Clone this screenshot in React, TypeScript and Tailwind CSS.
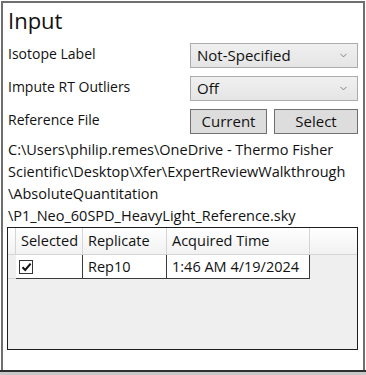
import { ChevronDown } from "lucide-react";

const font = { fontFamily: '"Open Sans", "Noto Sans", sans-serif' };

const Dropdown = ({ value }: { value: string }) => (
  <div className="flex items-center justify-between h-[25px] border border-[#acacac] bg-gradient-to-b from-[#f0f0f0] to-[#e5e5e5] pl-[6px] pr-[8px] text-[15px] text-[#111]">
    <span>{value}</span>
    <ChevronDown size={11} strokeWidth={1.5} className="text-[#555]" />
  </div>
);

const Button = ({ label, className }: { label: string; className: string }) => (
  <button className={`h-[25px] border border-[#707070] bg-[#dddddd] text-[15px] text-[#111] ${className}`}>
    {label}
  </button>
);

export default function App() {
  return (
    <div className="w-[366px] h-[375px] bg-white flex flex-col text-[#111]" style={font}>
      <div className="flex-1 mx-[1px] mt-[1px] border-t-2 border-l-2 border-r-2 border-[#6e6e6e] px-[5px] flex flex-col">
        <h1 className="text-[22px] leading-[30px] mt-[2px]">Input</h1>

        <div className="grid grid-cols-[182px_1fr] gap-y-[8px] mt-[8px] items-center text-[14px]">
          <span className="-mt-[5px]">Isotope Label</span>
          <Dropdown value="Not-Specified" />
          <span className="-mt-[5px]">Impute RT Outliers</span>
          <Dropdown value="Off" />
          <span className="-mt-[5px]">Reference File</span>
          <div className="flex gap-[7px]">
            <Button label="Current" className="w-[77px]" />
            <Button label="Select" className="flex-1" />
          </div>
        </div>

        <div className="mt-[5px] text-[14.5px] leading-[22px]">
          <div>C:\Users\philip.remes\OneDrive - Thermo Fisher</div>
          <div>Scientific\Desktop\Xfer\ExpertReviewWalkthrough</div>
          <div>\AbsoluteQuantitation</div>
          <div>\P1_Neo_60SPD_HeavyLight_Reference.sky</div>
        </div>

        <div className="-ml-[1px] h-[123px] border border-[#1e1e1e] bg-[#efefef] flex flex-col text-[14.5px]">
          <div className="flex h-[27px] bg-gradient-to-b from-[#ffffff] to-[#f2f2f2] border-b border-[#d5d5d5]">
            <div className="w-[8px] border-r border-[#d5d5d5]" />
            <div className="w-[67px] border-r border-[#d5d5d5] px-[5px] flex items-center">Selected</div>
            <div className="w-[84px] border-r border-[#d5d5d5] px-[5px] flex items-center">Replicate</div>
            <div className="w-[143px] border-r border-[#d5d5d5] px-[5px] flex items-center">Acquired Time</div>
            <div className="flex-1" />
          </div>
          <div className="flex h-[24px]">
            <div className="w-[8px] border-b border-[#d5d5d5]" />
            <div className="w-[67px] bg-white border-r border-b border-[#3a3a3a] flex items-center pl-[3px]">
              <div className="w-[14px] h-[14px] border border-[#333] bg-white flex items-center justify-center">
                <svg width="11" height="10" viewBox="0 0 11 10">
                  <path d="M1.5 5.2 L4.2 8 L9.6 1.6" fill="none" stroke="#111" strokeWidth="2" />
                </svg>
              </div>
            </div>
            <div className="w-[84px] bg-white border-r border-b border-[#3a3a3a] px-[5px] flex items-center">Rep10</div>
            <div className="w-[143px] bg-white border-r border-b border-[#3a3a3a] px-[5px] flex items-center">1:46 AM 4/19/2024</div>
          </div>
        </div>
        <div className="flex-1" />
      </div>
      <div className="h-[2px] bg-[#2f2f2f]" />
      <div className="h-[3px] bg-[#c8c8c8]" />
    </div>
  );
}
